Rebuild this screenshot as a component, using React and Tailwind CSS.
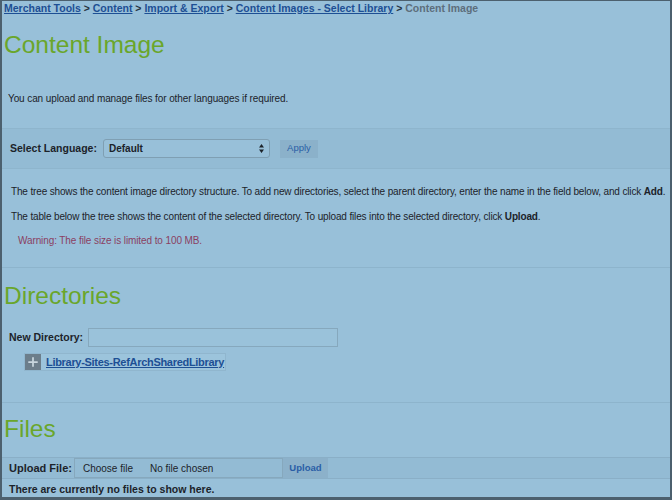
import { Plus } from "lucide-react";

const LINK = "text-[#1d4f94] underline";

function Crumbs() {
  const parts = ["Merchant Tools", "Content", "Import & Export", "Content Images - Select Library"];
  return (
    <div className="pl-[2px] pt-[1px] text-[10.5px] font-bold leading-[13px]">
      {parts.map((p) => (
        <span key={p}>
          <a className={LINK}>{p}</a>
          <span className="text-[#263340]"> &gt; </span>
        </span>
      ))}
      <span className="text-[#5d6e7c]">Content Image</span>
    </div>
  );
}

function Title({ children, className }) {
  return (
    <h1 className={`pl-[2px] text-[24.5px] leading-[28px] text-[#6aa62b] ${className}`}>{children}</h1>
  );
}

export default function App() {
  return (
    <div
      className="w-[672px] h-[500px] overflow-hidden bg-[#98c0d9] border-l-2 border-r-2 border-b-[3px] border-t border-[#4c606e] text-[#1c232a]"
      style={{ fontFamily: '"Liberation Sans", Arial, sans-serif' }}
    >
      <Crumbs />
      <Title className="mt-[16px]">Content Image</Title>

      <p className="mt-[34px] pl-[6px] text-[10px] leading-[12px] tracking-[-0.1px]">
        You can upload and manage files for other languages if required.
      </p>

      {/* language row */}
      <div className="mt-[23px] h-[41px] border-t border-b border-[#8eb5cd] bg-[#93bbd4] flex items-center pl-[8px]">
        <span className="text-[10.5px] font-bold">Select Language:</span>
        <div className="ml-[6px] w-[167px] h-[19px] rounded-[3px] border border-[#7f9fb3] bg-[#98c0d9] flex items-center px-[5px] text-[10px] font-bold">
          <span className="flex-1">Default</span>
          <svg width="5" height="9" viewBox="0 0 5 9">
            <path d="M2.5 0L5 3.5H0z M2.5 9L0 5.5h5z" fill="#1c232a" />
          </svg>
        </div>
        <button className="ml-[10px] w-[38px] h-[18px] bg-[#8bb1ca] text-[9.5px] text-[#2a5ea6]">Apply</button>
      </div>

      <p className="mt-[17px] pl-[9px] text-[10px] leading-[12px] tracking-[-0.15px] whitespace-nowrap">
        The tree shows the content image directory structure. To add new directories, select the parent directory, enter the name in the field below, and click <b>Add</b>.
      </p>
      <p className="mt-[13px] pl-[9px] text-[10px] leading-[12px] tracking-[-0.15px] whitespace-nowrap">
        The table below the tree shows the content of the selected directory. To upload files into the selected directory, click <b>Upload</b>.
      </p>
      <p className="mt-[12px] pl-[16px] text-[10px] leading-[12px] tracking-[-0.1px] text-[#8a3f62]">
        Warning: The file size is limited to 100 MB.
      </p>

      <div className="mt-[20px] border-t border-[#8db4cc]" />
      <Title className="mt-[14px]">Directories</Title>

      <div className="mt-[18px] flex items-center pl-[7px]">
        <span className="text-[10.5px] font-bold">New Directory:</span>
        <div className="ml-[5px] w-[250px] h-[19px] border border-[#86a8bd] bg-[#9ac2da]" />
      </div>
      <div className="mt-[6px] ml-[22px] w-[202px] h-[18px] flex items-center gap-[5px] bg-[#9cc4dc] border border-[#90b6ce]">
        <span className="w-[16px] h-[16px] bg-[#6c7e8b] flex items-center justify-center">
          <Plus size={14} strokeWidth={3} color="#c9d6de" />
        </span>
        <a className={`${LINK} text-[11px] font-bold tracking-[-0.3px]`}>Library-Sites-RefArchSharedLibrary</a>
      </div>

      <div className="mt-[31px] border-t border-[#8db4cc]" />
      <Title className="mt-[12px]">Files</Title>

      <div className="mt-[14px] h-[22px] border-t border-b border-[#8aafc7] bg-[#93bbd4] flex items-center pl-[7px]">
        <span className="text-[11px] font-bold">Upload File:</span>
        <div className="ml-[2px] w-[209px] h-[20px] border border-[#86a8bd] flex items-center text-[10px]">
          <span className="pl-[8px]">Choose file</span>
          <span className="pl-[17px]">No file chosen</span>
        </div>
        <button className="w-[45px] h-[20px] bg-[#8cb1ca] text-[9.5px] font-bold text-[#2a5ea6]">Upload</button>
      </div>
      <p className="mt-[4px] pl-[7px] text-[10.5px] font-bold leading-[12px]">There are currently no files to show here.</p>
    </div>
  );
}
